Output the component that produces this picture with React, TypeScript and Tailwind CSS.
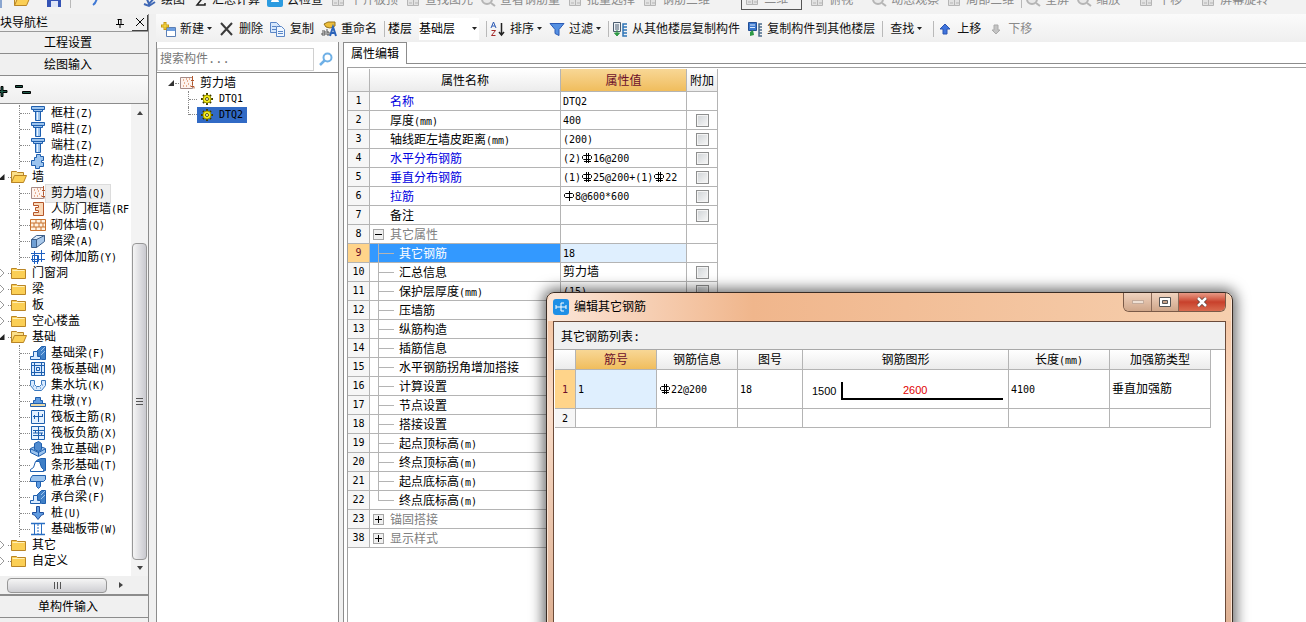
import React from "react";

const cjk = "font-['DejaVu_Sans_Mono','Noto_Sans_CJK_SC',sans-serif]";

// Bar grade marks: 1 = plain bar, 3 = ribbed bar
const RebarMark: React.FC<{ grade: string }> = ({ grade }) => (
  <svg
    viewBox="0 0 12 12"
    className="inline-block h-3 w-3 align-[-2px]"
    fill="none"
    stroke="currentColor"
  >
    {grade === "{1}" ? (
      <path d="M2.5 3.5h7l1 1v2l-1 1h-7l-1-1v-2zM6.5 1v10" />
    ) : (
      <path d="M2.5 3.5h7l1 1v2l-1 1h-7l-1-1v-2zM5.5 1v10M7.5 1v10M3 9.5h7" />
    )}
  </svg>
);

// Latin characters take half the width of a Chinese one
const Label: React.FC<{ text: string }> = ({ text }) => (
  <>
    {text
      .split(/(\{[13]\}|[!-z]+)/)
      .filter(Boolean)
      .map((part, i) =>
        part[0] === "{" ? (
          <RebarMark key={i} grade={part} />
        ) : /^[!-z]+$/.test(part) ? (
          <span key={i} className="text-[10px]">
            {part}
          </span>
        ) : (
          part
        )
      )}
  </>
);

const shapes: Record<string, React.ReactNode> = {
  column: (
    <g fill="#9cc4ee" stroke="#1f5fae">
      <path d="M1.5 1.5h13v3h-13zM3.500 4.500h9v2h-9zM5.500 6.500h5v9h-5z" />
      <path d="M7.500 7v8" stroke="#e8f3ff" />
    </g>
  ),
  cross: (
    <path
      d="M6.500 1.500h4v2h3v4h-2v2h2v4h-4v2h-4v-3h-4v-5h3v-3h2z"
      fill="#9cc4ee"
      stroke="#1f5fae"
    />
  ),
  folder: (
    <g stroke="#b98526">
      <path d="M.5 3.500h5l1 1h8v9h-14z" fill="#fbcf55" />
      <path d="M1.500 5.500h12" stroke="#fff0b8" />
    </g>
  ),
  open: (
    <g stroke="#b98526">
      <path d="M.5 13.500v-11h5l1 1h6v3" fill="#fbe08a" />
      <path d="M.5 13.500l3-7h12l-3 7z" fill="#fbcf55" />
    </g>
  ),
  wall: (
    <g>
      <path d="M1.500 2.500h12v11h-12z" fill="#fdf3ee" stroke="#a58a86" />
      <path
        d="M4 5h1M8 6h1M5 8h1M10 4h1M9 9h1M4 11h1M7 11h1M11 11h1M7 4h1"
        stroke="#d46a30"
      />
      <path d="M13.500 1v4M12 5.500h3M13.500 7v3M12 11.500h3v2" stroke="#b5562a" />
    </g>
  ),
  frameWall: (
    <path
      d="M3.500 1.500h10v13h-10v-3h5v-2h-3v-3h3v-2h-5z"
      fill="#fbd9b8"
      stroke="#b5562a"
    />
  ),
  brick: (
    <g stroke="#c9722f">
      <path d="M.5 2.500h15v11h-15z" fill="#fff3e2" />
      <path d="M1 6h14M1 10h14M6 3v3M11 3v3M4 6v4M9 6v4M13 6v4M6 10v3M11 10v3" />
    </g>
  ),
  darkBeam: (
    <g stroke="#3d5f8a">
      <path d="M1.500 6.500l5-4h8l-5 4z" fill="#dcebfa" />
      <path d="M1.500 6.500h5v8h-5z" fill="#6f9fd4" />
      <path d="M6.500 6.500l8-4v6l-8 6z" fill="#a9c8ea" />
    </g>
  ),
  tie: (
    <g stroke="#1d5fc0" fill="none">
      <path d="M1 4.500h14M1 10.500h14M4.500 2v13M11.500 1v12M7.500 7v8M2.500 6.500h6v6h-6z" />
    </g>
  ),
  beam: (
    <g stroke="#1f5fae">
      <path d="M5.500 7.500l6-6h4v13h-4z" fill="#3f7fc6" />
      <path d="M.5 14.500v-3h3v-5h4v5h3v3z" fill="#d8eaff" />
      <path d="M11 6l4-4M11 10l4-4" stroke="#9cc4ee" />
    </g>
  ),
  raft: (
    <g stroke="#1d5fae" fill="none">
      <path d="M1.500 1.500h13v13h-13z" fill="#d8eaff" />
      <path d="M4.500 1v14M11.500 1v14M1 4.500h14M1 11.500h14M6.500 6.500h3v3h-3z" />
    </g>
  ),
  pit: (
    <g stroke="#3b78bd">
      <path d="M.5 3.500h4v4l2 2h3l2-2v-4h4v5l-4 5h-7l-4-5z" fill="#d8eaff" />
      <path d="M3 9h1M6 11h1M10 11h1M12 8h1" />
    </g>
  ),
  pier: (
    <g stroke="#1f5fae">
      <path d="M.5 10.500h15v3h-15z" fill="#e9d9a8" />
      <path d="M5.500 4.500h5v3h2v3h-9v-3h2z" fill="#5f9be0" />
    </g>
  ),
  mainBar: (
    <g stroke="#1d5fae" fill="none">
      <path d="M1.500 1.500h13v13h-13z" fill="#e4f1ff" />
      <path d="M3 7.500h10M8.500 3v10M4.500 6v4M12.500 5v3" />
    </g>
  ),
  negBar: (
    <g stroke="#1d5fae" fill="none">
      <path d="M1.500 1.500h13v13h-13z" fill="#e4f1ff" />
      <path d="M8.500 2v12M3 5.500h11M3 10.500h11M5.500 5v3M11.500 8v3M3 8h10" />
    </g>
  ),
  isolated: (
    <g stroke="#1f5fae">
      <path d="M.5 7.500l7-3 8 3v4l-7 4-8-4z" fill="#9cc4ee" />
      <path d="M4.500 2.500l4-2 3 2v6l-3 2-4-2z" fill="#4f8bd0" />
      <path d="M1 8l7.500 3.500L15 8M8.500 11v4" fill="none" />
    </g>
  ),
  strip: (
    <g stroke="#1f5fae">
      <path d="M6.500 3.500l4-2h5v12l-4 1z" fill="#3f7fc6" />
      <path d="M.5 14.500v-2l3-2 2-6h4l2 6 2 2v2z" fill="#fff" />
    </g>
  ),
  cap: (
    <g stroke="#1f5fae">
      <path d="M.5 5.500l2-3h13v4l-2 2h-13z" fill="#9cc4ee" />
      <path d="M6.500 8.500h4v5l-2 2-2-2z" fill="#5f9be0" />
    </g>
  ),
  pile: (
    <path
      d="M6.500 1.500h3v6h4v2l-2 .5-3.500 4.500-3.500-4.500-2-.5v-2h4z"
      fill="#5f9be0"
      stroke="#1f4f9e"
    />
  ),
  band: (
    <g stroke="#2a6fc4" fill="none">
      <path d="M1 2.500h14M1 13.500h14" strokeWidth="1.500" />
      <path d="M4.500 3v10M11.500 3v10" />
      <path d="M8 3v10" strokeDasharray="2 1" />
    </g>
  ),
  gear: (
    <g>
      <path
        d="M8 2v12M2 8h12M4 4l8 8M12 4l-8 8"
        stroke="#3d3b00"
        strokeWidth="2"
      />
      <circle cx="8" cy="8" r="4" fill="#f5ee1e" stroke="#a39b00" />
      <circle cx="8" cy="8" r="1.500" fill="#fff" stroke="#5d5900" />
    </g>
  ),
  create: (
    <g>
      <path d="M6.500 6.500h9v9h-9z" fill="#fff" stroke="#5b7fb5" />
      <path d="M7 7h8v3H7z" fill="#6d9ee0" />
      <path d="M5 1v8M1 5h8" stroke="#c79a13" strokeWidth="3" />
      <path d="M5 2v6M2 5h6" stroke="#ffe34d" />
    </g>
  ),
  remove: (
    <path d="M2 2l11 12M13 2L2 14" stroke="#3b3b3b" strokeWidth="2" />
  ),
  copy: (
    <g stroke="#5b86c6">
      <path d="M.5 1.500h6l3 3v7h-9z" fill="#d6e7fb" />
      <path d="M6.500 5.500h5l3 3v7h-8z" fill="#eef6ff" />
      <path d="M2 5.500h4M2 8.500h4M8 10.500h5M8 12.500h5" />
    </g>
  ),
  rename: (
    <g>
      <path d="M3 3l4-2h7v4l-5 2-4-1z" fill="#edbe3a" stroke="#96731b" />
      <path d="M9 15l3-9 3 9M10 12h4" stroke="#2b63b9" strokeWidth="2" fill="none" />
      <path d="M1 10h3v4H1v-2h3M6 8v6h2v-3H6" stroke="#555" fill="none" />
    </g>
  ),
  sort: (
    <g fill="none">
      <path d="M1 7l2.500-6L6 7M2 5h3" stroke="#2c5bb5" />
      <path d="M1.500 9.500h4l-4 5h4" stroke="#a52a2a" />
      <path d="M11.500 2v11M9 11l2.500 3 2.500-3" stroke="#222" strokeWidth="1.500" />
    </g>
  ),
  funnel: (
    <path d="M1 2.500h14l-5 6v6l-4-2v-4z" fill="#5590e2" stroke="#2c5bb5" />
  ),
  floors: (
    <g>
      <path d="M1.500 1.500h7v9h-7z" fill="#eef3f8" stroke="#4b5d70" />
      <path d="M3 4h4M3 6h4M3 8h4" stroke="#4b5d70" />
      <path d="M5 9v4M2.500 12L5 15l2.500-3z" stroke="#2e9a45" fill="#2e9a45" />
      <path d="M15 3h-4v12h4M11 6h4M11 9h4M11 12h4" stroke="#2f75b8" strokeWidth="1.500" fill="none" />
    </g>
  ),
  floorsTo: (
    <g>
      <path d="M1.500 1.500h8v8h-8z" fill="#3a78cf" stroke="#244f94" />
      <path d="M3 4h5M3 6.500h5" stroke="#dcebff" />
      <path d="M3 11l3-2 1 5-4 1z" fill="#2e9a45" />
      <path d="M15 3h-3v12h3M12 6h3M12 9h3M12 12h3" stroke="#4b6b8a" strokeWidth="1.500" fill="none" />
    </g>
  ),
  up: <path d="M8 3l5 5h-3v5H6V8H3z" fill="#3f74dd" stroke="#2a55b0" />,
  down: <path d="M8 13l4-4h-2V4H6v5H4z" fill="#c4c4c4" stroke="#aaa" />,
  undo: <path d="M9 2c2 4 0 9-3 11" stroke="#3f78d5" strokeWidth="2" fill="none" />,
  pen: <path d="M5 5l3 7 6-7M3 12l5 2 6-4" stroke="#3f68b5" strokeWidth="2" fill="none" />,
  sum: <path d="M12 3H5l4 5-4 5h8v-2" stroke="#222" strokeWidth="1.500" fill="none" />,
  cloud: (
    <g>
      <rect y="0" width="16" height="15" rx="2" fill="#2b9be0" />
      <path d="M4 10c0-4 8-4 8 0z" fill="#fff" />
    </g>
  ),
  grey: (
    <g stroke="#b5b5b5" fill="#e2e2e2">
      <path d="M2.500 4.500h6v9h-6zM8.500 7.500h5v6h-5z" />
      <path d="M4 11h3M10 11h3" />
    </g>
  ),
  lens: (
    <g stroke="#b5b5b5" fill="#e8e8e8" strokeWidth="2">
      <circle cx="7" cy="7" r="5" />
      <path d="M11 11l4 3" />
    </g>
  ),
  save: (
    <g>
      <path d="M1 0h14v15H1z" fill="#3453b5" />
      <path d="M5 9h7v6H5z" fill="#dfe6f7" />
    </g>
  ),
};

const Icon: React.FC<{ name: string }> = ({ name }) => (
  <svg viewBox="0 0 16 16" className="h-4 w-4 shrink-0" fill="none">
    {shapes[name]}
  </svg>
);

const Caret: React.FC = () => (
  <svg viewBox="0 0 5 3" className="-ml-px h-[3px] w-[5px] shrink-0">
    <path d="M0 0h5L2.500 3z" fill="#222" />
  </svg>
);

const Separator: React.FC = () => (
  <span className="-mr-1 h-4 w-px shrink-0 bg-[#b9b9b9]" />
);

interface ToolProps {
  icon?: string;
  label: string;
  caret?: boolean;
  disabled?: boolean;
}

const Tool: React.FC<ToolProps> = ({ icon, label, caret, disabled }) => (
  <button
    disabled={disabled}
    className={`flex shrink-0 items-center gap-1 text-[12px] leading-4 whitespace-nowrap ${
      disabled ? "text-[#8a8a8a]" : "text-[#111]"
    }`}
  >
    {icon && <Icon name={icon} />}
    {label}
    {caret && <Caret />}
  </button>
);

const TopToolbar: React.FC = () => (
  <div className="flex h-[14px] shrink-0 items-end gap-[7px] overflow-hidden bg-[#f2f2f2] pb-[6px]">
    <div className="flex w-[134px] shrink-0 items-center gap-4">
      <span className="-mr-1 h-4 w-0.5 bg-[#8aa5cf]" />
      <Icon name="open" />
      <Icon name="save" />
      <span className="-ml-2 h-4 w-px bg-[#b9b9b9]" />
      <Icon name="undo" />
    </div>
    <Tool icon="pen" label="绘图" />
    <Tool icon="sum" label="汇总计算" />
    <Tool icon="cloud" label="云检查" />
    <Tool icon="grey" label="平齐板顶" disabled />
    <Tool icon="grey" label="查找图元" disabled />
    <Tool icon="lens" label="查看钢筋量" disabled />
    <Tool icon="grey" label="批量选择" disabled />
    <Tool icon="grey" label="钢筋三维" disabled />
    <div className="-mb-0.5 ml-6 flex w-[61px] shrink-0 border border-[#555] pb-0.5 pl-0.5">
      <Tool icon="grey" label="二维" disabled />
    </div>
    <Tool icon="grey" label="俯视" disabled />
    <div className="w-1 shrink-0" />
    <Tool icon="lens" label="动态观察" disabled />
    <Tool icon="grey" label="局部三维" disabled />
    <Separator />
    <Tool icon="lens" label="全屏" disabled />
    <Tool icon="lens" label="缩放" disabled />
    <div className="w-1 shrink-0" />
    <Tool icon="grey" label="平移" disabled />
    <div className="w-1 shrink-0" />
    <Tool icon="grey" label="屏幕旋转" disabled />
  </div>
);

const ComponentToolbar: React.FC = () => (
  <div className="flex h-[28px] shrink-0 items-center gap-[7px] overflow-hidden bg-linear-to-b from-[#fbfbfb] to-[#efefef] pt-px pl-1">
    <Tool icon="create" label="新建" caret />
    <Tool icon="remove" label="删除" />
    <Tool icon="copy" label="复制" />
    <Tool icon="rename" label="重命名" />
    <Separator />
    <label htmlFor="floor" className="shrink-0 text-[12px] leading-4">
      楼层
    </label>
    <div className="flex w-[60px] shrink-0 items-center bg-white">
      <select
        id="floor"
        className="h-[22px] w-[54px] appearance-none bg-white text-[12px] leading-4"
      >
        <option>基础层</option>
      </select>
      <Caret />
    </div>
    <Separator />
    <Tool icon="sort" label="排序" caret />
    <Tool icon="funnel" label="过滤" caret />
    <Separator />
    <Tool icon="floors" label="从其他楼层复制构件" />
    <Tool icon="floorsTo" label="复制构件到其他楼层" />
    <Separator />
    <div className="pr-1 pl-1">
      <Tool label="查找" caret />
    </div>
    <Separator />
    <Tool icon="up" label="上移" />
    <Tool icon="down" label="下移" disabled />
  </div>
);

const navItems: { icon: string; label: string; active?: boolean }[] = [
  { icon: "column", label: "框柱(Z)" },
  { icon: "column", label: "暗柱(Z)" },
  { icon: "column", label: "端柱(Z)" },
  { icon: "cross", label: "构造柱(Z)" },
  { icon: "open", label: "墙" },
  { icon: "wall", label: "剪力墙(Q)", active: true },
  { icon: "frameWall", label: "人防门框墙(RF" },
  { icon: "brick", label: "砌体墙(Q)" },
  { icon: "darkBeam", label: "暗梁(A)" },
  { icon: "tie", label: "砌体加筋(Y)" },
  { icon: "folder", label: "门窗洞" },
  { icon: "folder", label: "梁" },
  { icon: "folder", label: "板" },
  { icon: "folder", label: "空心楼盖" },
  { icon: "open", label: "基础" },
  { icon: "beam", label: "基础梁(F)" },
  { icon: "raft", label: "筏板基础(M)" },
  { icon: "pit", label: "集水坑(K)" },
  { icon: "pier", label: "柱墩(Y)" },
  { icon: "mainBar", label: "筏板主筋(R)" },
  { icon: "negBar", label: "筏板负筋(X)" },
  { icon: "isolated", label: "独立基础(P)" },
  { icon: "strip", label: "条形基础(T)" },
  { icon: "cap", label: "桩承台(V)" },
  { icon: "beam", label: "承台梁(F)" },
  { icon: "pile", label: "桩(U)" },
  { icon: "band", label: "基础板带(W)" },
  { icon: "folder", label: "其它" },
  { icon: "folder", label: "自定义" },
];

const NavRow: React.FC<{ item: (typeof navItems)[number] }> = ({ item }) => {
  const isFolder = item.icon === "folder" || item.icon === "open";
  return (
    <li>
      <button className="flex h-4 w-full items-center text-[12px] leading-4 whitespace-nowrap">
        {isFolder ? (
          <>
            <svg viewBox="0 0 8 8" className="h-2 w-2 shrink-0">
              {item.icon === "open" ? (
                <path d="M4.500 1v6H-2z" fill="#222" />
              ) : (
                <path d="M0 0l4 4-4 4" fill="#fff" stroke="#999" />
              )}
            </svg>
            <span className="w-[3px] shrink-0 border-t border-dotted border-[#888]" />
          </>
        ) : (
          <>
            <span className="w-[19px] shrink-0" />
            <span className="flex h-4 w-[11px] shrink-0 items-center border-l border-dotted border-[#888]">
              <span className="w-full border-t border-dotted border-[#888]" />
            </span>
          </>
        )}
        <Icon name={item.icon} />
        <span
          className={
            item.active
              ? "bg-[#efefef] px-[5px] outline outline-[#dcdcdc]"
              : "px-[5px]"
          }
        >
          <Label text={item.label} />
        </span>
      </button>
    </li>
  );
};

const ScrollArrow: React.FC<{ d: string; label: string }> = ({ d, label }) => (
  <button
    aria-label={label}
    className="flex h-4 w-4 shrink-0 items-center justify-center"
  >
    <svg viewBox="0 0 6 6" className="h-1.5 w-1.5">
      <path d={d} fill="#444" />
    </svg>
  </button>
);

const panelButton =
  "h-[22px] shrink-0 border-b border-[#8c8c8c] bg-[#f0f0f0] pr-3 text-center text-[12px] leading-[23px]";

const Navigator: React.FC = () => (
  <aside className="flex w-[149px] shrink-0 flex-col border-r border-[#8c8c8c] bg-[#f0f0f0]">
    <div className="flex h-[18px] shrink-0 items-center border-b border-[#9a9a9a] text-[12px] leading-4">
      <span className="flex-1">块导航栏</span>
      <button aria-label="pin" className="px-2">
        <svg viewBox="0 0 8 10" className="h-2.5 w-2" fill="none" stroke="#000">
          <path d="M2.500 1v5M1.500 1.500h4M5 1v5M0 6.500h8M4 7v3" />
        </svg>
      </button>
      <button
        aria-label="close"
        className="flex h-4 w-4 items-center justify-center border-r border-b border-[#444]"
      >
        <svg viewBox="0 0 8 8" className="h-2 w-2" stroke="#000">
          <path d="M0 0l8 8M8 0L0 8" />
        </svg>
      </button>
    </div>
    <button className={panelButton}>工程设置</button>
    <button className={panelButton}>绘图输入</button>
    <div className="flex h-[28px] shrink-0 items-center border-b border-[#8c8c8c] bg-linear-to-b from-[#fafafa] to-[#efefef]">
      <svg viewBox="0 0 32 14" className="h-3.5 w-8" fill="#1d5c4a" stroke="#000">
        <path d="M-3 7.500h4v-4h2v4h4v2h-4v4h-2v-4h-4z" />
        <path d="M15.500 2.500h7v2h-7zM22.500 8.500h8v2h-8z" />
      </svg>
    </div>
    <div className="flex min-h-0 flex-1 bg-white">
      <ul className="flex-1 overflow-hidden pt-px">
        {navItems.map((item) => (
          <NavRow key={item.label} item={item} />
        ))}
      </ul>
      <div className="flex w-[17px] shrink-0 flex-col items-center bg-[#f3f3f3] pt-px">
        <ScrollArrow label="up" d="M0 5h6L3 1z" />
        <div className="mt-[122px] flex w-[15px] flex-1 flex-col items-center justify-center gap-0.5 rounded-sm border border-[#979797] bg-linear-to-r from-[#f5f5f5] to-[#c9c9cf]">
          <span className="h-px w-[7px] bg-[#555]" />
          <span className="h-px w-[7px] bg-[#555]" />
          <span className="h-px w-[7px] bg-[#555]" />
        </div>
        <ScrollArrow label="down" d="M0 1h6L3 5z" />
      </div>
    </div>
    <div className="flex h-[20px] shrink-0 items-center border-b-2 border-[#8c8c8c] pl-[7px]">
      <div className="flex h-[15px] w-[100px] items-center justify-center gap-0.5 rounded-sm border border-[#979797] bg-linear-to-b from-[#f5f5f5] to-[#cfcfd3]">
        <span className="h-[7px] w-px bg-[#555]" />
        <span className="h-[7px] w-px bg-[#555]" />
        <span className="h-[7px] w-px bg-[#555]" />
      </div>
      <div className="ml-1.5">
        <ScrollArrow label="right" d="M1 0v6l4-3z" />
      </div>
    </div>
    <button className={panelButton}>单构件输入</button>
    <div className="h-1 shrink-0" />
  </aside>
);

const ComponentList: React.FC = () => (
  <section className="flex w-[183px] shrink-0 flex-col border-r border-l border-[#8c8c8c] bg-white">
    <div className="flex h-[31px] shrink-0 items-center border-b border-[#8c8c8c] pt-1">
      <input
        aria-label="搜索构件"
        placeholder="搜索构件..."
        className="h-[23px] w-[157px] border border-[#d0d0d0] px-0.5 text-[12px] placeholder:text-[#777]"
      />
      <button aria-label="搜索" className="flex flex-1 justify-center">
        <svg viewBox="0 0 14 14" className="h-3.5 w-3.5" fill="none" stroke="#6fb0e6">
          <circle cx="8.500" cy="5.500" r="4" strokeWidth="2" />
          <path d="M5.500 8.500L1 13" strokeWidth="2.500" />
        </svg>
      </button>
    </div>
    <ul className="pt-0.5 text-[12px] leading-4">
      <li>
        <button className="flex h-4 items-center pl-2.5">
          <svg viewBox="0 0 8 8" className="h-2 w-2">
            <path d="M7 1v6H1z" fill="#333" />
          </svg>
          <span className="w-1 border-t border-dotted border-[#888]" />
          <Icon name="wall" />
          <span className="pl-[5px]">剪力墙</span>
        </button>
      </li>
      {["DTQ1", "DTQ2"].map((name) => (
        <li key={name} className="flex h-4 items-center pl-[31px]">
          <span
            className={`flex w-[9px] border-l border-dotted border-[#888] ${
              name === "DTQ2" ? "h-2 items-end self-start" : "h-4 items-center"
            }`}
          >
            <span className="w-full border-t border-dotted border-[#888]" />
          </span>
          <button
            className={`flex h-4 items-center gap-1 pr-1 pl-0.5 ${
              name === "DTQ2" ? "bg-[#316ac5]" : ""
            }`}
          >
            <Icon name="gear" />
            <span className="text-[10px]">{name}</span>
          </button>
        </li>
      ))}
    </ul>
  </section>
);

interface Property {
  no: number;
  name: string;
  value?: string;
  kind?: "key" | "group" | "closed" | "child";
  check?: boolean;
}

const properties: Property[] = [
  { no: 1, name: "名称", value: "DTQ2", kind: "key" },
  { no: 2, name: "厚度(mm)", value: "400", check: true },
  { no: 3, name: "轴线距左墙皮距离(mm)", value: "(200)", check: true },
  { no: 4, name: "水平分布钢筋", value: "(2){3}16@200", kind: "key", check: true },
  { no: 5, name: "垂直分布钢筋", value: "(1){3}25@200+(1){3}22", kind: "key", check: true },
  { no: 6, name: "拉筋", value: "{1}8@600*600", kind: "key", check: true },
  { no: 7, name: "备注", check: true },
  { no: 8, name: "其它属性", kind: "group" },
  { no: 9, name: "其它钢筋", value: "18", kind: "child" },
  { no: 10, name: "汇总信息", value: "剪力墙", kind: "child", check: true },
  { no: 11, name: "保护层厚度(mm)", value: "(15)", kind: "child", check: true },
  { no: 12, name: "压墙筋", kind: "child" },
  { no: 13, name: "纵筋构造", kind: "child" },
  { no: 14, name: "插筋信息", kind: "child" },
  { no: 15, name: "水平钢筋拐角增加搭接", kind: "child" },
  { no: 16, name: "计算设置", kind: "child" },
  { no: 17, name: "节点设置", kind: "child" },
  { no: 18, name: "搭接设置", kind: "child" },
  { no: 19, name: "起点顶标高(m)", kind: "child" },
  { no: 20, name: "终点顶标高(m)", kind: "child" },
  { no: 21, name: "起点底标高(m)", kind: "child" },
  { no: 22, name: "终点底标高(m)", kind: "child" },
  { no: 23, name: "锚固搭接", kind: "closed" },
  { no: 38, name: "显示样式", kind: "closed" },
];

const cell = "border-r border-b border-[#b4b4b4] p-0";
const head = `${cell} bg-linear-to-b from-white to-[#ececec] pt-0.5 text-center font-normal`;
const headActive = `${cell} bg-linear-to-b from-[#f8d795] to-[#f0bd5c] pt-0.5 text-center font-normal text-[#6b0f2b]`;

const PropertyName: React.FC<{ row: Property }> = ({ row }) => {
  if (row.kind === "child") {
    return (
      <div className="flex h-[18px] pl-2 leading-5">
        <span
          className={`flex w-4 border-l border-[#b4b4b4] ${
            row.no === 22 ? "h-[10px] items-end" : "h-full items-center"
          }`}
        >
          <span className="w-full border-t border-[#b4b4b4]" />
        </span>
        <span className="pl-[5px]">
          <Label text={row.name} />
        </span>
      </div>
    );
  }
  if (row.kind === "group" || row.kind === "closed") {
    return (
      <div className="flex h-[18px] items-center pl-[3px] leading-5 text-[#808080]">
        <button
          aria-label={row.name}
          className="flex h-[11px] w-[11px] items-center justify-center border border-[#a5a5a5] bg-[#f0f0f0]"
        >
          <svg viewBox="0 0 7 7" className="h-[7px] w-[7px]" stroke="#000">
            <path d={row.kind === "group" ? "M0 3.500h7" : "M0 3.500h7M3.500 0v7"} />
          </svg>
        </button>
        <span className="pt-px pl-1.5">{row.name}</span>
      </div>
    );
  }
  return (
    <div
      className={`h-[18px] pl-5 leading-5 ${
        row.kind === "key" ? "text-[#0000e0]" : ""
      }`}
    >
      <Label text={row.name} />
    </div>
  );
};

const PropertyTable: React.FC = () => (
  <table className="w-[370px] table-fixed border-separate border-spacing-0 text-[12px] leading-[18px]">
    <colgroup>
      <col className="w-[22px]" />
      <col className="w-[191px]" />
      <col className="w-[126px]" />
      <col className="w-[31px]" />
    </colgroup>
    <thead>
      <tr className="h-[23px]">
        <th className={head}></th>
        <th className={head}>属性名称</th>
        <th className={headActive}>属性值</th>
        <th className={head}>附加</th>
      </tr>
    </thead>
    <tbody>
      {properties.map((row) => {
        const selected = row.no === 9;
        return (
          <tr key={row.no} className="h-[19px]">
            <td
              className={`${cell} text-center text-[10px] ${
                selected ? "bg-[#ffd48a] text-[#6b0f2b]" : "bg-[#f6f6f6]"
              }`}
            >
              {row.no}
            </td>
            <td className={`${cell} ${selected ? "bg-[#3399ff] text-white" : ""}`}>
              <PropertyName row={row} />
            </td>
            <td
              className={`${cell} pl-0.5 whitespace-nowrap ${
                selected ? "bg-[#dfeffe]" : ""
              }`}
            >
              <div className="h-[18px] overflow-hidden">
                <Label text={row.value ?? ""} />
              </div>
            </td>
            <td className={cell}>
              {row.check && (
                <input
                  type="checkbox"
                  aria-label={row.name}
                  className="mx-auto block h-[13px] w-[13px] appearance-none border border-[#8e8f8f] bg-linear-to-br from-[#cfd3d6] to-[#f8f8f8] shadow-[inset_0_0_0_1px_#f4f4f4]"
                />
              )}
            </td>
          </tr>
        );
      })}
    </tbody>
  </table>
);

const RebarDialog: React.FC = () => (
  <div
    role="dialog"
    aria-labelledby="dialog-title"
    className="absolute top-[292px] -bottom-4 left-[546px] flex w-[687px] flex-col rounded-t-lg border border-[#3a2c24] bg-linear-to-b from-[#f3c09a] via-[#f9dcc8] via-35% to-[#dcae90] px-[6px] shadow-[0_0_14px_3px_rgba(0,0,0,0.6),inset_0_0_0_1px_#fbe3d2]"
  >
    <div className="-mx-[5px] flex h-[28px] shrink-0 items-start rounded-t-lg bg-linear-to-r from-[#fbe6d8] via-[#f0b68c] via-30% to-[#f6cfae] pr-[5px] pl-[5px]">
      <div className="flex h-full flex-1 items-center gap-[5px]">
        <svg viewBox="0 0 16 16" className="h-4 w-4" fill="none">
          <rect width="16" height="16" rx="3" fill="#1e8fe6" />
          <path
            d="M8 4v8M8 4h3M8 12h3M3 8h10M3 6v4M13 6v4"
            stroke="#fff"
          />
        </svg>
        <h2 id="dialog-title" className="text-[12px] leading-4">
          编辑其它钢筋
        </h2>
      </div>
      <div className="flex h-[19px] overflow-hidden rounded-b-md border border-t-0 border-[#7a5a48]">
        <button
          aria-label="最小化"
          className="flex w-7 items-center justify-center border-r border-[#8a6a58] bg-linear-to-b from-[#f0d3bf] to-[#cfa68a]"
        >
          <span className="h-1 w-3 border border-[#c4ab9b] bg-[#eedfd3]" />
        </button>
        <button
          aria-label="最大化"
          className="flex w-[27px] items-center justify-center border-r border-[#8a6a58] bg-linear-to-b from-[#f0d3bf] to-[#cfa68a]"
        >
          <svg viewBox="0 0 12 10" className="h-2.5 w-3">
            <path d="M.5.5h11v9H.5z" fill="#fff" stroke="#555" />
            <path d="M3.500 3.500h5v3h-5z" fill="#c9a48b" stroke="#555" />
          </svg>
        </button>
        <button
          aria-label="关闭"
          className="flex w-[46px] items-center justify-center bg-linear-to-b from-[#e79a86] via-[#c8402b] to-[#d96a4e]"
        >
          <svg viewBox="0 0 12 10" className="h-2.5 w-3">
            <path d="M2 1l8 8M10 1L2 9" stroke="#5e4038" strokeWidth="4" />
            <path d="M2 1l8 8M10 1L2 9" stroke="#fff" strokeWidth="2.500" />
          </svg>
        </button>
      </div>
    </div>
    <div className="flex flex-1 flex-col border border-[#6b4b3a] bg-[#f0f0f0]">
      <p className="h-[27px] pl-[7px] text-[12px] leading-[30px]">其它钢筋列表:</p>
      <div className="flex-1 border-t border-[#a8a8a8] bg-white pl-px">
        <table className="w-[656px] table-fixed border-separate border-spacing-0 text-[12px] leading-[17px]">
          <colgroup>
            <col className="w-[21px]" />
            <col className="w-[81px]" />
            <col className="w-[81px]" />
            <col className="w-[65px]" />
            <col className="w-[206px]" />
            <col className="w-[101px]" />
            <col className="w-[101px]" />
          </colgroup>
          <thead>
            <tr className="h-[20px]">
              <th className={head}></th>
              <th className={headActive}>筋号</th>
              <th className={head}>钢筋信息</th>
              <th className={head}>图号</th>
              <th className={head}>钢筋图形</th>
              <th className={head}>
                <Label text="长度(mm)" />
              </th>
              <th className={head}>加强筋类型</th>
            </tr>
          </thead>
          <tbody>
            <tr className="h-[39px]">
              <td className={`${cell} bg-[#ffd48a] text-center text-[10px] text-[#6b0f2b]`}>
                1
              </td>
              <td className={`${cell} bg-[#dfeffe] pl-0.5 text-[10px]`}>1</td>
              <td className={`${cell} pl-0.5`}>
                <Label text="{3}22@200" />
              </td>
              <td className={`${cell} pl-0.5 text-[10px]`}>18</td>
              <td className={cell}>
                <div className="flex items-end pt-1 pr-[5px] pl-[9px] font-['Liberation_Sans',sans-serif] text-[11px]">
                  <span>1500</span>
                  <span className="ml-[5px] flex-1 border-b-2 border-l-2 border-black pr-4 text-center leading-4 text-[#e00000]">
                    2600
                  </span>
                </div>
              </td>
              <td className={`${cell} pl-0.5 text-[10px]`}>4100</td>
              <td className={`${cell} pl-0.5`}>垂直加强筋</td>
            </tr>
            <tr className="h-[19px]">
              <td className={`${cell} bg-[#f6f6f6] text-center text-[10px]`}>2</td>
              <td className={cell}></td>
              <td className={cell}></td>
              <td className={cell}></td>
              <td className={cell}></td>
              <td className={cell}></td>
              <td className={cell}></td>
            </tr>
          </tbody>
        </table>
      </div>
    </div>
  </div>
);

const App: React.FC = () => {
  return (
    <div
      className={`relative flex h-screen flex-col overflow-hidden bg-[#f0f0f0] text-black ${cjk}`}
    >
      <TopToolbar />
      <div className="flex min-h-0 flex-1">
        <Navigator />
        <main className="ml-[7px] flex min-w-0 flex-1 flex-col">
          <ComponentToolbar />
          <div className="flex min-h-0 flex-1">
            <ComponentList />
            <section className="ml-1 flex min-w-0 flex-1 flex-col border-l border-[#8c8c8c] bg-white">
              <div className="flex h-[22px] shrink-0">
                <button className="w-[63px] shrink-0 border-t border-r border-[#8c8c8c] text-[12px] leading-5">
                  属性编辑
                </button>
                <div className="flex-1 border-b border-[#8c8c8c]" />
              </div>
              <div className="mt-[3px] ml-[3px] flex-1 border-t border-l border-[#a0a0a0] pt-px">
                <PropertyTable />
              </div>
            </section>
          </div>
        </main>
      </div>
      <RebarDialog />
    </div>
  );
};

export default App;
